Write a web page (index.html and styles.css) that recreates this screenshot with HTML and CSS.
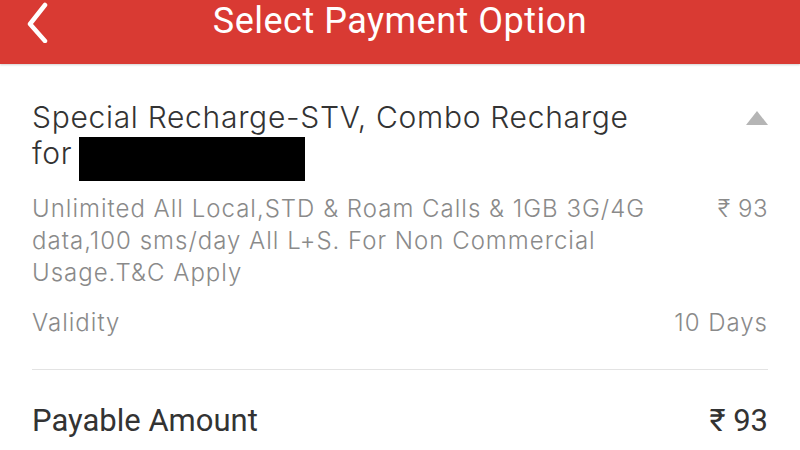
FILE: index.html
```html
<!DOCTYPE html>
<html>
<head>
<meta charset="utf-8">
<link rel="stylesheet" href="styles.css">
</head>
<body>
<header class="topbar">
  <span class="back"><svg width="24" height="42" viewBox="0 0 24 42"><path d="M20 4 L5 23 L20 40" fill="none" stroke="#fff" stroke-width="4.5" stroke-linecap="round" stroke-linejoin="round"/></svg></span>
  <h1 class="title">Select Payment Option</h1>
</header>
<main class="content">
  <section class="plan">
    <div class="plan-head">
      <div class="plan-name">Special Recharge-STV, Combo Recharge<br>for <span class="redact"></span></div>
      <span class="caret"></span>
    </div>
    <div class="row desc-row">
      <p class="desc">Unlimited All Local,STD &amp; Roam Calls &amp; 1GB 3G/4G data,100 sms/day All L+S. For Non Commercial Usage.T&amp;C Apply</p>
      <span class="price">₹ 93</span>
    </div>
    <div class="row validity">
      <span>Validity</span>
      <span>10 Days</span>
    </div>
  </section>
  <div class="total">
    <span>Payable Amount</span>
    <span>₹ 93</span>
  </div>
</main>
</body>
</html>
```
FILE: styles.css
```css
* { box-sizing: border-box; }
html, body { margin: 0; padding: 0; background: #fff; }
body { width: 800px; height: 450px; overflow: hidden; font-family: Inter, Roboto, sans-serif; }
.topbar {
  height: 64px;
  background: #d93a33;
  position: relative;
  display: flex;
  align-items: center;
  justify-content: center;
  box-shadow: 0 1px 2px rgba(0,0,0,0.18);
}
.back { position: absolute; left: 25px; top: 1px; }
.title {
  margin: 0;
  margin-top: -22px;
  color: #fff;
  font-family: Roboto, sans-serif;
  font-weight: 400;
  font-size: 36px;
  letter-spacing: 0.5px;
}
.content { padding: 0 32px; }
.plan { padding-top: 35px; }
.plan-head { display: flex; justify-content: space-between; align-items: flex-start; }
.plan-name { font-size: 30px; line-height: 36px; color: #333; font-weight: 300; letter-spacing: 0.7px; }
.redact { display: inline-block; width: 226px; height: 44px; background: #000; vertical-align: -17px; margin-left: -2px; }
.caret {
  width: 0; height: 0;
  border-left: 11px solid transparent;
  border-right: 11px solid transparent;
  border-bottom: 14px solid #b5b5b5;
  margin-top: 12px;
}
.row { display: flex; justify-content: space-between; color: #8a8a8a; font-size: 24px; font-weight: 300; letter-spacing: 1px; }
.desc-row { margin-top: 12px; }
.desc { margin: 0; width: 640px; line-height: 32px; }
.price { line-height: 32px; letter-spacing: 0.5px; }
.validity { margin-top: 18px; line-height: 32px; padding-bottom: 30px; border-bottom: 1px solid #e3e3e3; }
.total { display: flex; justify-content: space-between; font-size: 31px; line-height: 36px; color: #333; margin-top: 33px; font-family: Roboto, sans-serif; }
```
